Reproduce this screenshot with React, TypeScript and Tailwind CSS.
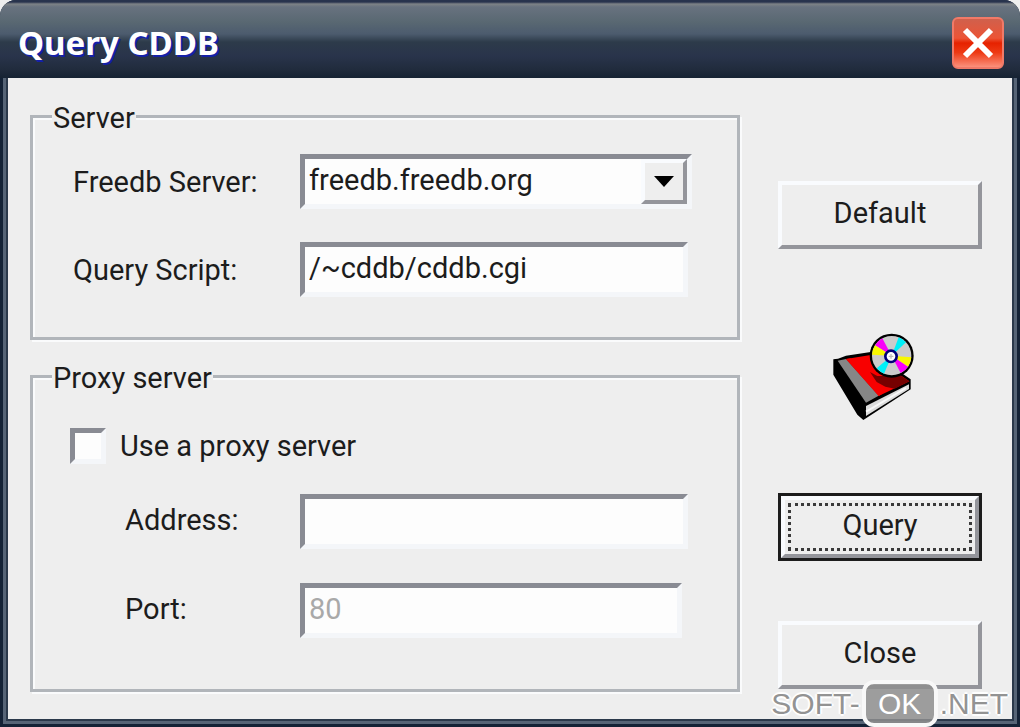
import React from "react";

const sunken =
  "h-[55px] bg-[#fdfdfd] border-[5px] border-t-[#898b93] border-l-[#898b93] border-r-[#f4f6f9] border-b-[#f4f6f9] outline-none";
const raised =
  "h-[68px] bg-[#eeeeee] border-[4px] border-t-[#f9fbfe] border-l-[#f9fbfe] border-r-[#94959b] border-b-[#94959b]";
const group =
  "border-[3px] border-[#b1b5ba] shadow-[inset_2px_2px_0_#fafbfc,2px_2px_0_#fafbfc]";
const legend = "ml-[19px] h-8 bg-[#eeeeee] pt-1 pr-px pl-px leading-7";

function BookDisc() {
  return (
    <svg aria-hidden="true" viewBox="36 39 288 264" className="h-[88px] w-24">
      <path d="M40 118 L54 116 L78 107 L152 96 L272 178 L272 208 L130 300 L112 284 L40 164 Z" fill="#000" />
      <path d="M78 117 L152 105 L268 184 L176 228 Z" fill="#f80000" />
      <path d="M53 122 L78 117 L176 227 L138 248 Z" fill="#868686" />
      <path d="M78 117 L92 115 L186 222 L176 228 Z" fill="#f80000" />
      <path d="M150 156 L172 168 L244 168 L268 184 L224 206 L196 200 L170 186 Z" fill="#760000" />
      <path d="M138 258 L267 193 L267 207 L138 288 Z" fill="#dcdcdc" />
      <path d="M150 268 L258 204 M138 275 L150 268" stroke="#f8f8f8" strokeWidth="6" />
      <circle cx="215" cy="107" r="66" fill="#000" />
      <circle cx="215" cy="107" r="59" fill="#cbcbcb" />
      <path d="M215 107 L165 76 A59 59 0 0 1 187 55 Z" fill="#f800f8" />
      <path d="M215 107 L156 104 A59 59 0 0 1 165 76 Z" fill="#f8f800" />
      <path d="M215 107 L236 52 A59 59 0 0 1 258 67 Z" fill="#00f0f8" />
      <path d="M215 107 L274 112 A59 59 0 0 1 264 140 Z" fill="#f8f800" />
      <path d="M215 107 L264 140 A59 59 0 0 1 242 159 Z" fill="#f800f8" />
      <path d="M215 107 L192 161 A59 59 0 0 1 170 145 Z" fill="#00f0f8" />
      <circle cx="213" cy="109" r="17" fill="#fff" stroke="#000078" strokeWidth="8" />
      <path d="M213 102 V116 M206 109 H220" stroke="#bbb" strokeWidth="4" />
    </svg>
  );
}

export default function App() {
  return (
    <div className="relative min-h-screen bg-[#eeeeee] font-[Roboto,'Liberation_Sans',sans-serif] text-[29px] leading-10 text-[#1c1c1c]">
      <div className="flex min-h-screen flex-col overflow-hidden rounded-t-2xl bg-[#17263a]">
        <header className="flex h-[78px] items-center justify-between bg-[linear-gradient(#28334d_0px,#28334d_2px,#7d8286_4px,#68727f_7px,#596872_22px,#4c5b6e_34px,#2d3b4a_42px,#29344b_56px,#202b3c_70px,#162333_78px)] pt-2 pr-4 pl-[18px]">
          <h1 className="font-['Noto_Sans',sans-serif] text-[33px] font-bold text-white [text-shadow:2px_2px_0_#1420a8]">
            Query CDDB
          </h1>
          <button
            type="button"
            aria-label="Close window"
            className="flex h-[52px] w-[52px] items-center justify-center rounded-md border-2 border-[#f07a68] bg-[linear-gradient(#d0604c,#ec5436_40%,#e62200_50%,#ee3a14_70%,#fb907c)]"
          >
            <svg aria-hidden="true" viewBox="0 0 32 32" className="h-8 w-8">
              <path d="M3 3 L29 29 M29 3 L3 29" stroke="#fff" strokeWidth="6" />
            </svg>
          </button>
        </header>

        <div className="flex grow border-x-[3px] border-b-[3px] border-[#142236]">
          <div className="flex grow border-x-[3px] border-b-[3px] border-[#566476]">
            <form
              className="flex grow justify-between gap-[38px] border-x-2 border-b-2 border-[#2b394b] bg-[#eeeeee] pr-[30px] pl-[22px]"
              onSubmit={(e) => e.preventDefault()}
            >
              <div className="flex grow flex-col gap-5 pt-[22px] pb-[27px]">
                <fieldset className={group + " pb-10"}>
                  <legend className={legend}>Server</legend>
                  <div className="flex flex-col gap-[33px] pt-[22px] pl-10">
                    <div className="flex items-center">
                      <label htmlFor="server" className="w-[227px] shrink-0 leading-9">
                        Freedb Server:
                      </label>
                      <div className={sunken + " grid w-[392px] grid-cols-[1fr_46px]"}>
                        <select
                          id="server"
                          className="col-span-2 col-start-1 row-start-1 appearance-none pb-1 pl-1 leading-10 outline-none"
                        >
                          <option>freedb.freedb.org</option>
                        </select>
                        <span className="pointer-events-none col-start-2 row-start-1 flex items-center justify-center border-[4px] border-t-[#f9fbfe] border-r-[#94959b] border-b-[#94959b] border-l-[#f9fbfe] bg-[#eeeeee]">
                          <svg aria-hidden="true" viewBox="0 0 20 11" className="h-[11px] w-5">
                            <path d="M0 0 H20 L10 11 Z" fill="#000" />
                          </svg>
                        </span>
                      </div>
                    </div>
                    <div className="flex items-center">
                      <label htmlFor="script" className="w-[227px] shrink-0 leading-9">
                        Query Script:
                      </label>
                      <input
                        id="script"
                        type="text"
                        defaultValue="/~cddb/cddb.cgi"
                        className={sunken + " w-[388px] pb-1 pl-1"}
                      />
                    </div>
                  </div>
                </fieldset>

                <fieldset className={group + " grow"}>
                  <legend className={legend}>Proxy server</legend>
                  <div className="flex items-center pt-9 pl-[37px]">
                    <input
                      id="proxy"
                      type="checkbox"
                      className="h-9 w-9 appearance-none border-[5px] border-t-[#898b93] border-r-[#f4f6f9] border-b-[#f4f6f9] border-l-[#898b93] bg-[#fdfdfd]"
                    />
                    <label htmlFor="proxy" className="pl-[14px] leading-9">
                      Use a proxy server
                    </label>
                  </div>
                  <div className="flex flex-col gap-[34px] pt-[30px] pl-[92px]">
                    <div className="flex items-center">
                      <label htmlFor="address" className="w-[175px] shrink-0 pb-1 leading-9">
                        Address:
                      </label>
                      <input id="address" type="text" className={sunken + " w-[388px] pb-1 pl-1"} />
                    </div>
                    <div className="flex items-center">
                      <label htmlFor="port" className="w-[175px] shrink-0 pb-1 leading-9">
                        Port:
                      </label>
                      <input
                        id="port"
                        type="text"
                        disabled
                        defaultValue="80"
                        className={sunken + " w-[382px] pb-1 pl-1 text-[#a9a9a9]"}
                      />
                    </div>
                  </div>
                </fieldset>
              </div>

              <div className="flex w-[204px] shrink-0 flex-col pt-[103px]">
                <button type="button" className={raised + " pb-1"}>
                  Default
                </button>
                <div className="flex justify-center pt-[84px] pb-[72px]">
                  <BookDisc />
                </div>
                <div className="flex border-[3px] border-[#1c1c1c]">
                  <button
                    type="submit"
                    className="h-[62px] grow border-[4px] border-t-[#f9fbfe] border-r-[#94959b] border-b-[#94959b] border-l-[#f9fbfe] bg-[#eeeeee] p-[3px]"
                  >
                    <span className="flex h-full items-center justify-center border-[3px] border-dotted border-[#3a3a3a] pb-1">
                      Query
                    </span>
                  </button>
                </div>
                <button type="button" className={raised + " mt-[60px] pb-1"}>
                  Close
                </button>
              </div>
            </form>
          </div>
        </div>
      </div>

      <div className="pointer-events-none absolute right-3 bottom-0 flex items-center font-['Liberation_Sans',sans-serif] text-[30px] text-[#939393]">
        <span className="[text-shadow:2px_0_1px_#fff,-2px_0_1px_#fff,0_2px_1px_#fff,0_-2px_1px_#fff]">SOFT-</span>
        <span className="mx-[2px] flex h-[47px] w-[76px] items-center justify-center rounded-xl border-[4px] border-[#f8f8f8] bg-[#8e8e8e]/85 text-white">
          OK
        </span>
        <span className="[text-shadow:2px_0_1px_#fff,-2px_0_1px_#fff,0_2px_1px_#fff,0_-2px_1px_#fff]">.NET</span>
      </div>
    </div>
  );
}
